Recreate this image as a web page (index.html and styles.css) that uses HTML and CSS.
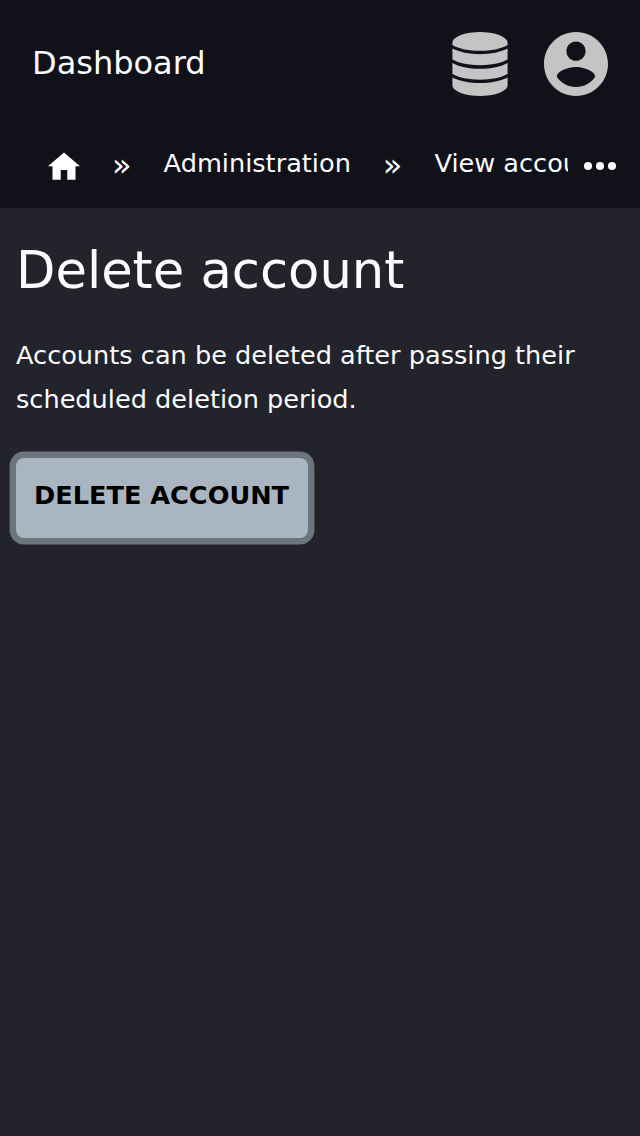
FILE: index.html
```html
<!DOCTYPE html>
<html lang="en">
<head>
<meta charset="utf-8">
<title>Delete account</title>
<link rel="stylesheet" href="styles.css">
</head>
<body>
<header class="header">
  <div class="topbar">
    <a class="brand">Dashboard</a>
    <div class="actions">
      <svg class="icon-db" viewBox="0 0 56 64"><path d="M.4 10C2 4 14 0 28 0s26 4 27.600 10v3C49 17 39 18.800 28 18.800S7 17 .4 13zM.4 16.500C7 20 17 22.200 28 22.200s21-2.200 27.600-5.700v11C49 31.200 39 33.200 28 33.200S7 31.200 .4 27.500zM.4 31C7 34.700 17 36.800 28 36.800s21-2.100 27.600-5.800v11C49 45.700 39 47.700 28 47.700S7 45.700 .4 42zM.4 45.500C7 49 17 51 28 51s21-2 27.600-5.500V54C54 60 42 64 28 64S2 60 .4 54z"/></svg>
      <svg class="icon-user" viewBox="2 2 20 20"><path d="M12 2C6.480 2 2 6.480 2 12s4.480 10 10 10 10-4.480 10-10S17.520 2 12 2zm0 3c1.660 0 3 1.340 3 3s-1.340 3-3 3-3-1.340-3-3 1.340-3 3-3zm0 14.200c-2.500 0-4.710-1.280-6-3.220.03-1.990 4-3.080 6-3.080 1.990 0 5.970 1.090 6 3.080-1.290 1.940-3.500 3.220-6 3.220z"/></svg>
    </div>
  </div>
  <nav class="crumbs">
    <div class="trail">
      <svg class="home" viewBox="0 0 32 28"><path d="M16 .5L32 14.300h-4.500v13.500h-8.200V18h-6.600v9.800H4.500V14.300H0z"/></svg>
      <span class="sep">»</span>
      <a class="crumb">Administration</a>
      <span class="sep">»</span>
      <a class="crumb">View account</a>
    </div>
    <svg class="more" viewBox="0 0 32 8"><circle cx="4" cy="4" r="4"/><circle cx="16" cy="4" r="4"/><circle cx="28" cy="4" r="4"/></svg>
  </nav>
</header>
<main class="content">
  <h1 class="title">Delete account</h1>
  <p class="text">Accounts can be deleted after passing their scheduled deletion period.</p>
  <button class="button">DELETE ACCOUNT</button>
</main>
</body>
</html>
```
FILE: styles.css
```css
* { box-sizing: border-box; }
body {
  margin: 0;
  min-height: 1136px;
  background: #23232b;
  color: #fbfcfe;
  font-family: "DejaVu Sans", sans-serif;
}
svg { display: block; flex: none; }
.header { height: 208px; background: #11111a; }
.topbar {
  display: flex;
  align-items: center;
  justify-content: space-between;
  height: 128px;
  padding: 0 32px;
}
.brand { font-size: 32px; line-height: 48px; padding-bottom: 2px; }
.actions { display: flex; align-items: center; gap: 36px; fill: #c4c4c4; }
.icon-db { width: 56px; height: 64px; }
.icon-user { width: 64px; height: 64px; }
.crumbs { display: flex; height: 80px; padding: 0 24px 0 48px; fill: #fff; }
.trail {
  display: flex;
  flex: 1;
  overflow: hidden;
  white-space: nowrap;
  margin-right: 16px;
}
.home { width: 32px; height: 28px; margin-top: 24px; }
.sep { font-size: 32px; line-height: 38px; margin: 18px 32px 0; }
.crumb { font-size: 25.6px; line-height: 38px; margin-top: 16px; }
.more { width: 32px; height: 8px; margin-top: 34px; }
.content { padding: 32px 16px; }
.title { margin: 0; font-size: 51.2px; font-weight: 400; line-height: 60px; }
.text { margin: 33px 0 37px; font-size: 25.6px; line-height: 44px; }
.button {
  display: block;
  width: 292px;
  height: 80px;
  padding: 0 1px 6px 0;
  border: 0;
  border-radius: 8px;
  background: #a9b5c1;
  box-shadow: 0 0 0 6.4px #6c757d;
  color: #000;
  font: bold 25.6px "DejaVu Sans", sans-serif;
  white-space: nowrap;
}
```
